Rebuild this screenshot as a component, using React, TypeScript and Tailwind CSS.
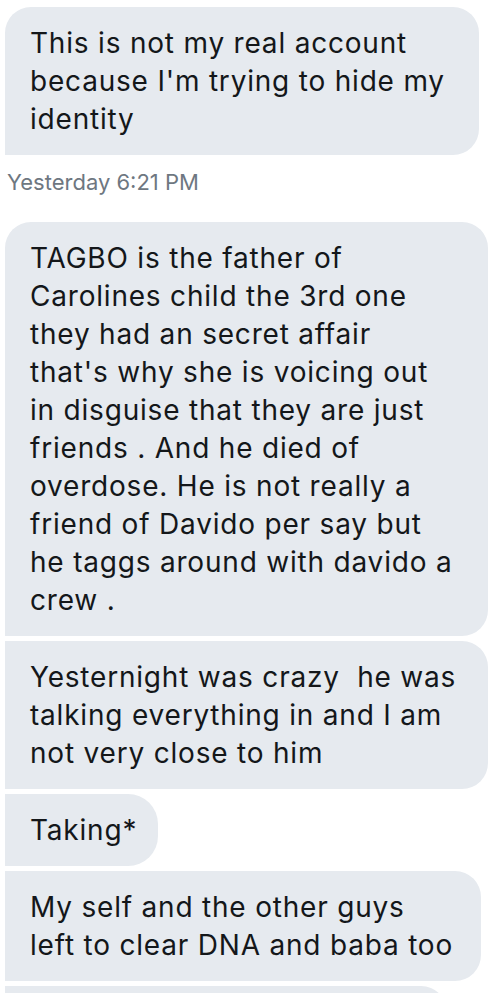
import React from 'react';

type Bubble = { lines: string[]; width: string; corners: string };

const firstGroup: Bubble[] = [
  {
    lines: ['This is not my real account', "because I'm trying to hide my", 'identity'],
    width: 'w-[474px]',
    corners: 'rounded-tl-[26px] rounded-r-[26px]',
  },
];

const secondGroup: Bubble[] = [
  {
    lines: [
      'TAGBO is the father of',
      'Carolines child the 3rd one',
      'they had an secret affair',
      "that's why she is voicing out",
      'in disguise that they are just',
      'friends . And he died of',
      'overdose. He is not really a',
      'friend of Davido per say but',
      'he taggs around with davido a',
      'crew .',
    ],
    width: 'w-[483px]',
    corners: 'rounded-tl-[26px] rounded-r-[26px]',
  },
  {
    lines: ['Yesternight was crazy  he was', 'talking everything in and I am', 'not very close to him'],
    width: 'w-[483px]',
    corners: 'rounded-r-[26px]',
  },
  {
    lines: ['Taking*'],
    width: 'w-[153px]',
    corners: 'rounded-r-[30px]',
  },
  {
    lines: ['My self and the other guys', 'left to clear DNA and baba too'],
    width: 'w-[476px]',
    corners: 'rounded-r-[26px]',
  },
];

const MessageBubble: React.FC<{ bubble: Bubble }> = ({ bubble }) => (
  <div
    className={`${bubble.width} ${bubble.corners} bg-[#e6eaef] pl-[25px] pr-4 py-[17px] text-[28px] leading-[38px] tracking-[0.8px] text-[#14171a] whitespace-pre`}
  >
    {bubble.lines.map((line, i) => (
      <div key={i}>{line}</div>
    ))}
  </div>
);

export default function App() {
  return (
    <div className="w-[497px] h-[993px] overflow-hidden bg-white pl-[5px] pt-[7px] font-['Inter',sans-serif]">
      <div className="flex flex-col gap-[5px]">
        {firstGroup.map((b, i) => (
          <MessageBubble key={i} bubble={b} />
        ))}
      </div>
      <p className="mt-[13px] ml-[2px] text-[22px] leading-[28px] text-[#6e7781]">Yesterday 6:21 PM</p>
      <div className="mt-[26px] flex flex-col gap-[5px]">
        {secondGroup.map((b, i) => (
          <MessageBubble key={i} bubble={b} />
        ))}
        {/* next message, only its top edge is on screen */}
        <div className="w-[442px] h-[60px] rounded-r-[26px] bg-[#e6eaef]" />
      </div>
    </div>
  );
}
